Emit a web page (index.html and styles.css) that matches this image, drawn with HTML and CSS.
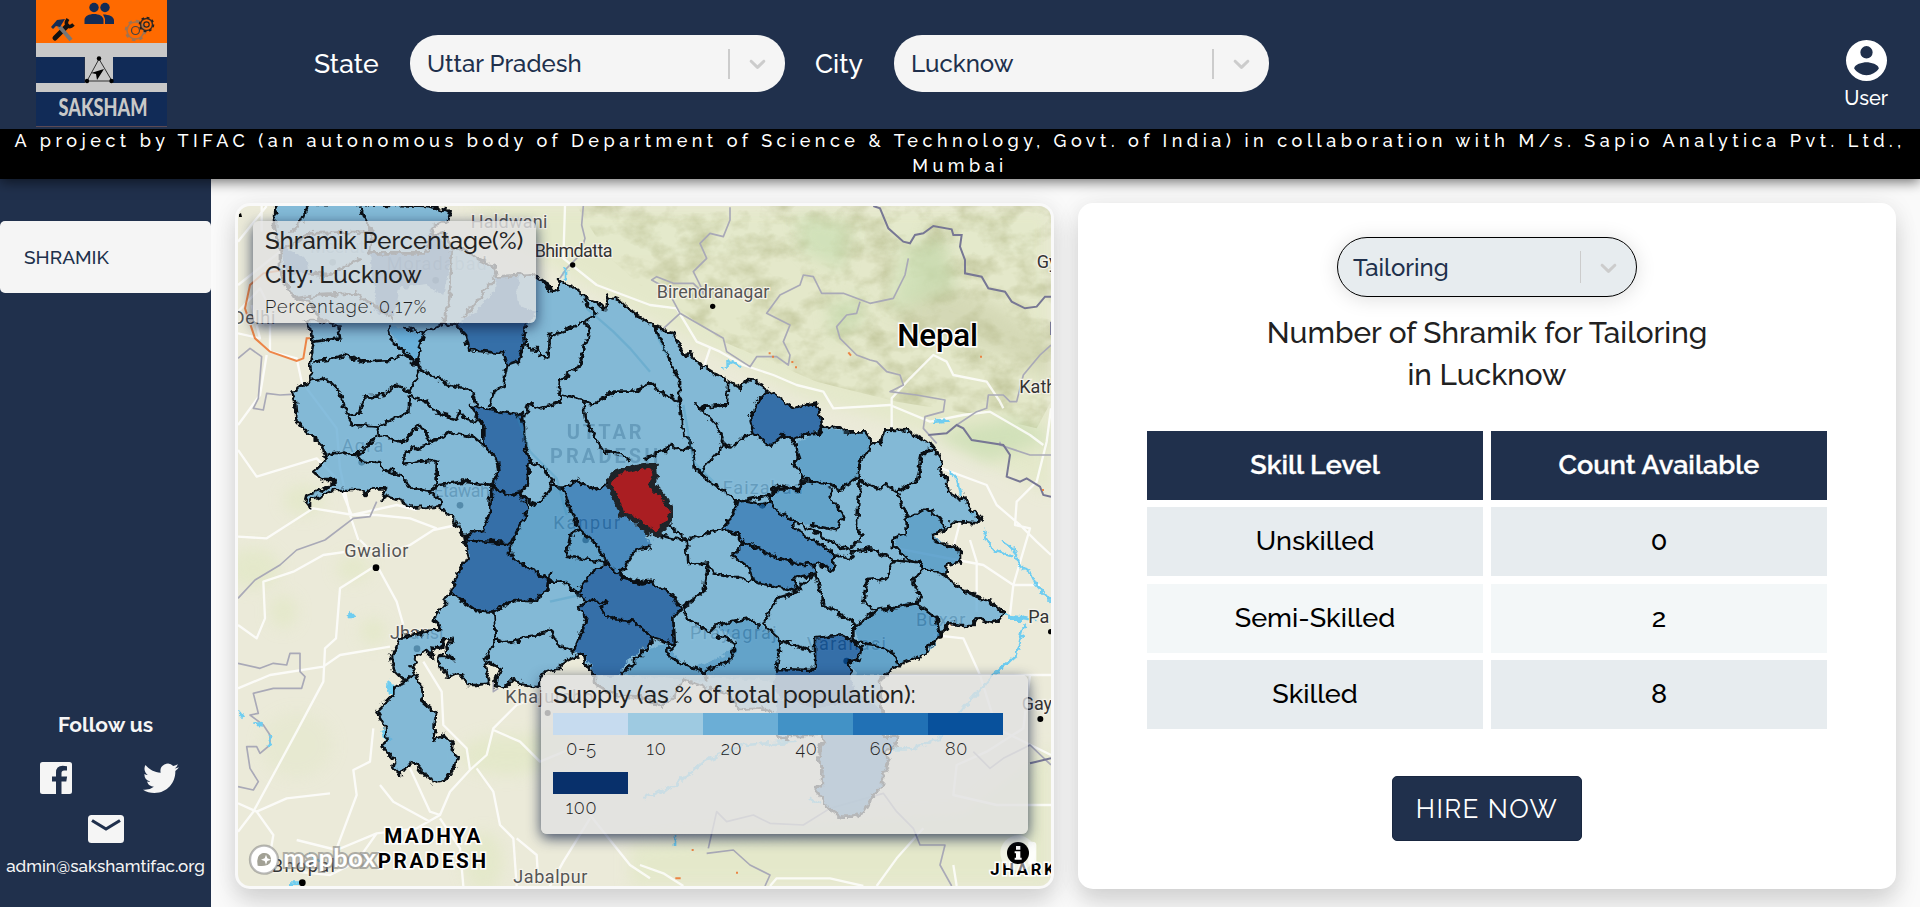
FILE: index.html
```html
<!DOCTYPE html>
<html lang="en">
<head>
<meta charset="utf-8">
<title>Saksham</title>
<link rel="stylesheet" href="styles.css">
</head>
<body>
<header class="top">
  <div class="bar">
    <svg class="logo" viewBox="0 0 131 127">
      <path fill="#ff6a00" d="M0 0h131v44H0z"/><path fill="#c8c8c8" d="M0 43h131v14H0zM49 56h28v28H49zM0 83h131v9H0z"/>
      <path fill="#112b57" d="M0 57h48v26H0zM77 57h54v26H77zM0 92h131v34H0z"/><path fill="#5b4a55" d="M0 126h131v1H0z"/>
      <g fill="#142c55"><circle cx="58" cy="7.500" r="4.700"/><circle cx="69" cy="7.500" r="4.700"/><path d="M48.500 24v-4c0-8 19-8 19 0v4zM69 24v-5q-1-3-2-4.500c6 0 11 2 11 6v3.500z"/></g>
      <path d="M19 38L31 26" stroke="#111" stroke-width="5" stroke-linecap="round"/><path d="M32 19q-3 4-.5 6.500t6-1" stroke="#111" stroke-width="3.500" fill="none"/>
      <path d="M23 26l12 14" stroke="#777" stroke-width="4"/><path d="M15 27l6-7 8-1-5 8-4-1-3 3z" fill="#142c55"/>
      <g fill="none"><circle cx="99.500" cy="30.500" r="8.500" stroke="#a87248" stroke-width="1.600"/><circle cx="99.500" cy="30.500" r="9.800" stroke="#98745a" stroke-width="2" stroke-dasharray="3.600 4.100"/><circle cx="99.500" cy="30.500" r="4" stroke="#444" stroke-width="1.200"/>
      <circle cx="110.500" cy="24.500" r="6" stroke="#3a2a20" stroke-width="1.500"/><circle cx="110.500" cy="24.500" r="7" stroke="#222" stroke-width="1.600" stroke-dasharray="2.700 2.800"/><circle cx="110.500" cy="24.500" r="2.700" stroke="#222" stroke-width="1.200"/></g>
      <path d="M63 59L51 81H76Z" fill="none" stroke="#333"/><circle cx="63" cy="58.500" r="2.200"/><circle cx="51" cy="81" r="2.200"/><circle cx="75.500" cy="81" r="2.200"/><path d="M68 69l-13 4 5 1 1 6z"/>
      <text x="67" y="116" class="logo-text" textLength="89" lengthAdjust="spacingAndGlyphs">SAKSHAM</text>
    </svg>
    <div class="filters">
      <label class="flabel state">State</label>
      <div class="select"><span>Uttar Pradesh</span><i></i><svg viewBox="0 0 20 20"><path d="M4.516 7.548c.436-.446 1.043-.481 1.576 0L10 11.295l3.908-3.747c.533-.481 1.141-.446 1.574 0 .436.445.408 1.197 0 1.615l-4.695 4.502c-.217.223-.502.335-.787.335s-.57-.112-.789-.335L4.516 9.163c-.408-.418-.436-1.170 0-1.615z"/></svg></div>
      <label class="flabel city">City</label>
      <div class="select"><span>Lucknow</span><i></i><svg viewBox="0 0 20 20"><path d="M4.516 7.548c.436-.446 1.043-.481 1.576 0L10 11.295l3.908-3.747c.533-.481 1.141-.446 1.574 0 .436.445.408 1.197 0 1.615l-4.695 4.502c-.217.223-.502.335-.787.335s-.57-.112-.789-.335L4.516 9.163c-.408-.418-.436-1.170 0-1.615z"/></svg></div>
    </div>
    <div class="user"><svg viewBox="0 0 496 496"><path fill="#fff" fill-rule="evenodd" d="M248 0a248 248 0 1 0 0 496a248 248 0 1 0 0-496zM248 74a74 74 0 1 1 0 149a74 74 0 1 1 0-149zM248 426c-62 0-117-32-149-80c1-49 99-76 149-76s148 27 149 76c-32 48-87 80-149 80z"/></svg><span>User</span></div>
  </div>
  <div class="banner">A project by TIFAC (an autonomous body of Department of Science &amp; Technology, Govt. of India) in collaboration with M/s. Sapio Analytica Pvt. Ltd., Mumbai</div>
</header>
<div class="body">
  <aside class="side">
    <a class="nav">SHRAMIK</a>
    <div class="follow">
      <b>Follow us</b>
      <div class="social">
        <svg class="fb" viewBox="0 0 32 32"><path fill="#f5f5f5" d="M2.500 0h27Q32 0 32 2.500v27Q32 32 29.500 32H21.500V19.600h4.800l.8-5H21.500V11q0-2.600 2.600-2.600H27V4.200q-2-.4-4.300-.4Q16 3.800 16 10.600v4H12v5h4V32H2.500Q0 32 0 29.500v-27Q0 0 2.500 0z"/></svg>
        <svg class="tw" viewBox="0 0 24 19.500"><path fill="#f5f5f5" d="M23.954 2.569a10 10 0 0 1-2.825.775 4.958 4.958 0 0 0 2.163-2.723c-.951.555-2.005.959-3.127 1.184a4.920 4.920 0 0 0-8.384 4.482C7.691 6.094 4.066 4.130 1.640 1.161a4.822 4.822 0 0 0-.666 2.475c0 1.710.87 3.213 2.188 4.096a4.904 4.904 0 0 1-2.228-.616v.061a4.923 4.923 0 0 0 3.946 4.827 4.996 4.996 0 0 1-2.212.085 4.937 4.937 0 0 0 4.604 3.417A9.868 9.868 0 0 1 0 17.540a13.995 13.995 0 0 0 7.557 2.209c9.054 0 13.999-7.496 13.999-13.986 0-.209 0-.420-.015-.630a9.936 9.936 0 0 0 2.413-2.564z"/></svg>
      </div>
      <svg class="mail" viewBox="0 0 36 28"><rect width="36" height="28" rx="3.500" fill="#f5f5f5"/><path d="M4 5.500L18 14L32 5.500" fill="none" stroke="#20304c" stroke-width="3.200"/></svg>
      <span class="email">admin@sakshamtifac.org</span>
    </div>
  </aside>
  <main>
    <section class="map">
      <svg class="canvas" viewBox="24 33 2439 2040">
        <defs>
          <filter id="jag" x="-2%" y="-2%" width="104%" height="104%" color-interpolation-filters="sRGB"><feTurbulence type="fractalNoise" baseFrequency=".05" numOctaves="3" seed="4"/><feDisplacementMap in="SourceGraphic" scale="24" xChannelSelector="R" yChannelSelector="G"/></filter>
          <filter id="hills" x="0" y="0" width="100%" height="100%" color-interpolation-filters="sRGB"><feTurbulence type="fractalNoise" baseFrequency=".011 .016" numOctaves="4" seed="9"/><feColorMatrix values="0 0 0 0 .62  0 0 0 0 .64  0 0 0 0 .42  2.2 0 0 0 -.9" result="n"/><feComposite in="n" in2="SourceAlpha" operator="in"/></filter>
          <filter id="soft"><feGaussianBlur stdDeviation="22"/></filter>
          <path id="up" d="M136 20L590 33 662 48 655 75 610 95 605 125 640 110 668 165 700 160 740 190 795 215 800 245 860 240 910 238 945 262 965 290 985 285 990 258 1030 275 1070 310 1100 320 1125 345 1130 305 1165 315 1200 345 1235 370 1275 398 1330 412 1360 480 1380 472 1405 505 1495 560 1530 578 1548 555 1578 557 1615 585 1690 637 1760 622 1777 695 1827 697 1850 712 1905 712 1930 745 1952 745 1963 703 2030 706 2100 745 2115 765 2135 800 2125 830 2150 850 2155 890 2190 910 2205 905 2220 940 2240 955 2258 975 2245 985 2165 980 2150 1005 2112 1020 2115 1038 2145 1048 2190 1065 2190 1100 2150 1110 2145 1140 2180 1170 2195 1185 2280 1220 2320 1250 2315 1270 2290 1285 2240 1270 2230 1290 2190 1290 2160 1285 2130 1320 2095 1355 2090 1375 2005 1410 1965 1440 1950 1455 1955 1555 1960 1625 2000 1625 2000 1650 1965 1675 1978 1710 1960 1735 1955 1775 1930 1800 1900 1850 1870 1865 1835 1865 1800 1845 1770 1805 1750 1780 1775 1775 1778 1715 1765 1695 1770 1645 1788 1645 1775 1620 1675 1620 1675 1635 1645 1630 1640 1620 1630 1555 1590 1540 1530 1545 1500 1500 1435 1480 1360 1455 1330 1505 1300 1535 1230 1505 1150 1500 1095 1465 1095 1445 1065 1405 1060 1375 1015 1395 980 1425 935 1435 925 1475 870 1465 850 1453 825 1478 795 1470 800 1445 815 1420 775 1400 765 1410 775 1465 740 1470 715 1470 695 1435 680 1435 650 1450 645 1425 625 1410 635 1380 672 1395 645 1370 665 1335 640 1330 640 1360 605 1355 610 1385 580 1370 555 1385 560 1405 545 1415 555 1435 578 1490 578 1520 618 1555 610 1635 645 1620 668 1645 665 1670 680 1685 675 1715 650 1750 625 1765 590 1747 560 1710 540 1703 510 1740 488 1720 495 1700 458 1655 470 1635 465 1595 440 1550 490 1500 490 1473 525 1460 490 1425 480 1385 500 1355 515 1325 630 1305 625 1285 610 1270 660 1200 685 1130 715 1085 705 1050 700 1025 680 990 670 965 625 935 560 940 520 920 475 905 455 915 465 880 430 880 405 900 385 885 310 885 240 915 240 940 225 920 230 900 290 880 320 855 280 855 250 830 290 795 275 750 225 705 200 680 195 620 185 590 245 555 240 505 250 450 240 400 225 375 270 375 240 320 195 310 165 265 150 230 150 170 135 100Z"/>
        </defs>
        <rect x="24" y="33" width="2439" height="2040" fill="#ebead9"/>
        <g filter="url(#soft)" fill="#e2e8c6" opacity=".75">
          <path d="M720 33H2463V900L2100 720 1700 600 1350 420 1100 290 850 150z"/><ellipse cx="70" cy="1120" rx="80" ry="60"/><ellipse cx="160" cy="1250" rx="40" ry="50"/><ellipse cx="220" cy="915" rx="60" ry="45"/><ellipse cx="370" cy="1120" rx="50" ry="40"/><ellipse cx="430" cy="1310" rx="40" ry="40"/><ellipse cx="830" cy="1680" rx="140" ry="60"/><ellipse cx="960" cy="1640" rx="70" ry="40"/><path d="M1200 1950L1800 1880 2200 1860 2463 1650V2073H1200z"/><ellipse cx="760" cy="2000" rx="60" ry="90"/><ellipse cx="200" cy="1650" rx="110" ry="100" opacity=".5"/>
        </g>
        <path filter="url(#hills)" opacity=".45" fill="#000" d="M1040 33H2463V620L2420 700 2250 660 2000 620 1760 560 1620 500 1480 440 1330 330 1230 270 1140 190z"/>
        <path filter="url(#soft)" fill="#b9bd92" opacity=".35" d="M2090 90L2150 100 2130 260 2300 330 2400 400 2463 420V560L2300 470 2100 420 1990 380 2080 260z"/>
        <g filter="url(#soft)" fill="#c5dcae" opacity=".6"><path d="M1700 60l160 30-20 140-120-60zM2020 160l120-30 40 150-200 70zM2110 720l240-50 120 60-200 70z"/><path d="M1790 330l100-30 10 80-90 50z"/></g>
        <g fill="none" stroke="#fff" stroke-width="7" opacity=".8" stroke-linejoin="round">
          <path d="M24 140L110 33M95 33V110M24 270L150 170M24 350L90 280 120 340M24 415L90 430 65 330M120 350V470L200 490 215 560 320 700 330 820 360 960 385 1035M24 690L90 600 110 480M24 765L80 845 260 790 320 850 365 960M24 1025L110 1030 250 940 370 960 440 960 540 970 620 1000M365 960L500 930 560 945M390 1035L440 1085 540 1050 610 1005 680 990M440 1110L330 1180 318 1330 285 1360 280 1460 200 1610 70 1850 24 1910M440 1110L500 1220 520 1290M24 1480L120 1440 280 1415 330 1380 480 1355M24 1290L80 1330 105 1270 100 1160 190 1130 280 1080 420 1060M580 1400L635 1490 640 1590 710 1660 720 1725 660 1790 630 1860 560 1900 440 1915 380 2000 300 2040 200 2030M720 1725L770 1680 790 1600 860 1530 940 1500M740 1720L790 1790 810 1890 850 1930 860 2073M790 1605L870 1640 930 1700 1050 1650M540 1720L600 1850 630 1860M430 1600L420 1700 370 1725 380 1800 320 1960M450 1770L490 1820 600 1880M24 1825L80 1850 130 1920 120 1980M80 1850L170 1810 300 1795M200 1935L320 1965 440 1915M630 1870L690 1960 700 2073M860 1930L920 1980 925 2060M1080 1870L1000 2000 960 2073M1080 1860L1200 2010 1260 2050"/>
          <path d="M1005 33L1000 190 1100 270 1260 330 1340 340 1400 440 1470 470 1540 510 1630 540 1700 570 1780 590 1810 640 1980 630 2100 680 2200 660 2280 650 2400 720 2440 750M1985 700V610L2040 550 2110 480 2150 500 2170 540 2270 560 2310 620 2320 640M2463 640L2450 740 2420 860 2360 920 2355 990 2400 1000 2350 1170 2430 1170M2000 1060L2260 1110 2350 1170 2340 1260M2135 820L2270 870 2300 930 2370 990 2420 1040 2463 1080M2110 1320L2200 1330 2250 1440 2300 1600 2463 1680M1960 1440H2463M2400 1440L2380 1600 2270 1670 2180 1710 2170 1800 2300 1830 2463 1830M1230 2010L1300 2035 1360 2073M1620 2073L1640 2050 1800 2050 1900 2073M1940 2073L2000 1990 2080 1900M2170 2010L2180 2073M2220 1035L2240 1100 2240 1250M2190 980L2170 1060M1440 460L1420 520"/>
        </g>
        <g fill="none" stroke="#a9a9b7" stroke-width="5" stroke-linejoin="round">
          <path d="M24 490L60 460 95 485 85 610 70 640 100 645 110 595 150 600 185 598M24 1210L75 1155 150 1110 200 1065 285 1035M285 1035L370 970 420 965 440 920M24 1405L90 1420 130 1405 170 1410 180 1375 210 1375 210 1430 225 1445 215 1480 130 1480 70 1495 85 1555 60 1560 100 1590 120 1620 120 1650 90 1675 80 1655 50 1655 60 1720 85 1760 70 1785 24 1775M790 1460V1490L805 1480M1500 37L1500 75 1480 125 1440 115 1410 145 1430 190 1390 230 1425 300M1425 300L1390 265 1330 265 1280 245 1265 255 1310 280 1350 355 1290 410M1350 355L1480 430 1490 470 1560 515 1580 485 1640 485 1675 510 1680 480 1660 440 1680 390 1610 355 1650 300 1710 270 1720 240 1750 245 1775 295 1840 295 1920 325 1990 310 2025 240 2035 190M1890 320L1880 355 1850 360 1820 395 1830 430 1880 480 1920 495 1940 500 1970 530 2010 540 2020 570 1980 590 2060 600 2145 615 2140 650 2085 665 2080 700 2120 745M2180 690L2240 650 2270 640 2275 600 2320 600 2340 620 2360 620 2380 540 2430 480 2463 450M2310 740L2310 750 2400 780 2463 780"/>
          <path d="M1060 33L1055 90 1065 130 1050 180 1010 220 990 250M1435 1960L1460 1850 1490 1880 1570 1860 1620 1885 1720 1890 1800 1840 1960 1795 2000 1850 2050 1900 2070 1950 2145 1950 2130 2010 2165 2073M1430 1975L1510 1965 1560 2010 1620 2040 1605 2073M2230 1670L2280 1720 2320 1690 2400 1650 2463 1710" />
        </g>
        <path fill="none" stroke="#777794" stroke-width="6" d="M1930 33L1950 40 1975 100 2020 140 2040 145 2055 120 2080 115 2110 93 2165 103 2170 120 2195 120 2190 155 2205 195 2205 235 2255 245 2275 280 2325 290 2345 320 2385 340 2420 335 2445 305H2463M2095 720L2150 715 2180 690 2200 700 2225 735 2320 750 2340 780 2330 845 2370 860 2390 850 2430 875 2440 900 2463 905M2400 1705L2463 1690M2463 380V420"/>
        <g fill="none" stroke="#6fcdf0" stroke-width="8" filter="url(#jag)"><path d="M1005 220L1005 255M2155 830L2180 850 2195 900M2220 940L2230 970M2260 1005L2275 1040 2300 1070 2350 1085M2310 1035L2350 1060 2370 1110 2400 1130 2420 1170 2463 1220M2320 1260L2420 1275M2385 1285L2360 1380 2280 1450 2200 1540 2130 1630 2050 1660 1980 1660M1240 1810L1340 1770 1420 1700 1540 1650 1700 1640M1480 520L1500 500 1540 515M2115 680L2160 676M120 1620V1650M70 1585L95 1588M24 1545L45 1570M1335 1920V1950M180 2063H210M240 1975L270 2000M1740 1810L1770 1830"/><path stroke-width="16" d="M355 1255L370 1270M475 1460L490 1500M455 1600L475 1640M2340 1270h40"/></g>
        <path fill="none" stroke="#ec7a36" stroke-width="6" opacity=".9" d="M240 430L230 430 220 490 200 498 120 470 75 430 45 340 60 270 100 235 160 225M1616 475h6M1626 485h6M1684 501h6M1695 517h6M1855 472L1863 482M2250 485h6M2436 885h6M1385 1965h6M1518 2033h6M1336 2050h16"/>
        <g class="cities">
          <text x="8" y="388" textLength="128">Delhi</text><text x="722" y="100" textLength="230">Haldwani</text><text x="914" y="185" textLength="234" class="ink">Bhimdatta</text><text x="1280" y="309" textLength="338">Birendranagar</text><text x="2420" y="218" class="ink">Gy</text><text x="2368" y="594" class="ink">Kath</text>
          <text x="343" y="1087" textLength="192">Gwalior</text><text x="480" y="1333" textLength="160">Jhansi</text><text x="826" y="1525" textLength="264">Khajuraho</text><text x="850" y="2065" textLength="222">Jabalpur</text><text x="2395" y="1283" class="ink">Pa</text><text x="2375" y="1546" class="ink">Gay</text><text x="125" y="2031" textLength="190" class="ink">Bhopal</text>
          <text x="335" y="770" textLength="125">Agra</text><text x="610" y="907" textLength="170">Etawah</text><text x="970" y="1003" textLength="200">Kanpur</text><text x="1478" y="898" textLength="240">Faizabad</text><text x="1380" y="1333" textLength="260">Prayagraj</text><text x="1730" y="1366" textLength="238">Varanasi</text><text x="2058" y="1293" textLength="148">Buxar</text><text x="240" y="173" textLength="165">Meerut</text><text x="470" y="226" textLength="300">Moradabad</text>
        </g>
        <g fill="#000"><circle cx="1028" cy="210" r="8"/><circle cx="1448" cy="334" r="8"/><circle cx="438" cy="1118" r="10"/><circle cx="953" cy="1554" r="9"/><circle cx="217" cy="2063" r="10"/><circle cx="2462" cy="1310" r="8"/><circle cx="2431" cy="1572" r="9"/><circle cx="2130" cy="1322" r="9"/><circle cx="395" cy="802" r="10"/><circle cx="690" cy="931" r="10"/><circle cx="1067" cy="1035" r="10"/><circle cx="1597" cy="931" r="10"/><circle cx="1511" cy="1366" r="10"/><circle cx="1850" cy="1398" r="10"/><circle cx="561" cy="1361" r="10"/><circle cx="308" cy="202" r="10"/><circle cx="617" cy="256" r="10"/><path d="M27 66v-8l6-4 3 12z"/></g>
        <g class="states"><text x="1010" y="732" textLength="225">UTTAR</text><text x="960" y="804" textLength="325">PRADESH</text></g>
        <g opacity=".8" filter="url(#jag)">
          <use href="#up" fill="#6aaed6"/>
          <g fill="#08519c">
            <path d="M680 390L740 345 790 290 800 245 870 245 860 300 865 330 920 355 895 385 880 400 885 440 865 500 830 512 820 475 770 470 715 465 705 420z"/>
            <path d="M720 630L860 660 875 648 885 700 885 760 900 800 890 870 870 895 895 940 880 970 845 1045 840 1080 905 1125 960 1155 955 1180 930 1195 920 1220 850 1215 790 1250 735 1245 700 1220 665 1200 685 1130 720 1080 705 1045 700 1025 760 1005 780 950 785 875 805 830 800 790 760 750 760 690z"/>
            <path d="M1040 1195L1085 1130 1135 1110 1175 1145 1230 1165 1265 1160 1325 1200 1355 1240 1330 1270 1335 1350 1270 1330 1230 1370 1180 1410 1175 1440 1095 1445 1065 1380 1030 1370 1060 1300 1070 1265 1045 1245 1070 1215z"/>
            <path d="M1615 585L1690 637 1760 622 1777 695 1770 715 1720 720 1690 735 1660 720 1620 755 1570 710 1560 670 1590 610z"/>
            <path d="M1760 1330L1840 1320 1895 1360 1885 1395 1855 1400 1865 1440 1880 1500 1840 1535 1750 1540 1650 1510 1625 1440 1640 1422 1760 1428 1755 1380z"/>
            <path d="M150 150L230 190 235 235 170 235zM420 175H590L600 100 665 170 640 300 590 270 510 280 490 370 440 350z"/>
          </g>
          <g fill="#2171b5">
            <path d="M1000 880L1040 855 1095 885 1140 860 1180 960 1250 1010 1265 1055 1230 1060 1215 1065 1170 1140 1135 1105 1095 1045 1050 1005 1020 940z"/>
            <path d="M1520 915L1600 930 1620 920 1640 950 1690 975 1690 1000 1790 1060 1810 1080 1810 1130 1760 1105 1755 1135 1690 1150 1705 1190 1570 1160 1560 1120 1505 1080 1540 1050 1530 1020 1470 1005 1510 960z"/>
            <path d="M1640 1510L1750 1540 1840 1535 1880 1500 1950 1540 1955 1555 1960 1625 2000 1625 2000 1650 1965 1675 1978 1710 1960 1735 1955 1775 1930 1800 1900 1850 1870 1865 1835 1865 1800 1845 1770 1805 1750 1780 1775 1775 1778 1715 1765 1695 1770 1645 1788 1645 1775 1620 1675 1620 1645 1620z"/>
          </g>
          <g fill="#4292c6">
            <path d="M895 940L970 875 1000 880 1020 940 1050 1005 1095 1045 1135 1105 1085 1130 1040 1195 1000 1160 960 1155 905 1125 840 1080 845 1045 880 970zM1700 745L1777 700 1850 712 1905 712 1930 745 1890 800 1885 845 1830 885 1790 870 1720 855 1700 800zM1625 880L1700 880 1730 855 1800 870 1810 920 1840 960 1820 1005 1740 990 1680 970 1620 930zM2030 970L2090 940 2120 965 2150 1005 2115 1020 2145 1048 2190 1065 2190 1100 2150 1110 2145 1140 2080 1120 2030 1090 1990 1030 2030 1015zM1870 1300L1940 1245 2040 1220 2120 1270 2130 1320 2090 1375 2005 1410 1965 1440 1880 1440 1860 1400 1895 1380 1895 1350zM1460 1290L1560 1270 1600 1300 1650 1340 1640 1430 1630 1460 1420 1440 1400 1420 1520 1360 1520 1340zM1175 1440L1210 1400 1240 1370 1310 1340 1350 1400 1430 1430 1430 1460z"/>
          </g>
          <path fill="#4ba3dc" d="M475 390L520 400 580 420 560 505 510 450z"/>
        </g>
        <g class="edges" filter="url(#jag)">
            <use href="#up"/>
            <path d="M235 33L215 80 180 115M390 33L405 75 425 110 420 175 590 175 605 110M150 170L240 115 420 110M235 235L300 240 390 190M195 310L270 300 380 295 490 370M665 170L660 300 640 380M795 250L700 370M270 375L325 390 330 430 250 440M475 390L480 430 565 510M580 415L640 385 680 390M560 505L580 415 520 395M250 500L290 495 340 480 400 500 480 495 520 480 565 510M565 510L570 525 540 590 500 570 460 600 405 605 390 655 350 660 330 590 290 550 245 555M565 520L660 570 730 590 740 630M540 600L535 650 445 695 370 690 350 660M545 605L590 620 620 655 680 670 690 650 710 675 760 680M445 695L450 725 510 740 530 735 545 710 570 690 600 740M600 745L560 760 525 770 520 810 600 795 620 800 620 870M600 740L640 730 650 710 730 725 770 760M290 780L340 770 385 780 440 720M385 780L400 800 450 805 460 830 510 840 545 880 600 890 630 870 700 860 785 870M600 890L635 920 625 935M465 825h30M350 775h40"/>
            <path d="M680 390L705 420 715 465 770 470 820 475 830 512 820 575 790 590 780 635M830 512L865 500 885 440 880 400 895 385M885 450L915 470 925 455 930 480 955 490 960 420 1000 410 1060 380 1095 360 1060 310M1060 380L1080 400 1060 470 1050 510 990 555 985 600 1060 615 1090 630 1150 590 1210 590 1260 565 1290 590 1340 615 1355 640M885 670L895 625 930 640 985 620 990 600M1060 620L1065 670 1090 720 1120 770 1170 775 1200 800M1275 398L1315 485 1350 560 1350 630 1360 720 1385 745 1395 820 1440 860 1520 915M1495 560L1490 630 1410 640 1400 625 1420 650 1460 690 1480 730 1470 765 1440 800 1410 835M1480 745L1505 760 1540 725 1570 715M1385 750L1360 770 1320 750 1300 770 1240 790M1615 585L1590 610 1560 670 1570 710 1620 755 1660 720 1690 735 1720 720 1770 715 1777 695M1690 735L1710 790 1690 800 1720 850 1700 885 1650 870 1620 900 1520 920"/>
            <path d="M720 630L860 660 875 648 885 700 885 760 900 800 890 870 870 895 840 900 785 875 805 830 800 790 760 750 760 690zM785 875L780 950 760 1005 700 1025M870 895L895 940M900 800L940 815 970 870 920 930 895 920 870 895M970 870L1000 880 1040 855 1095 885 1140 860M895 940L880 970 845 1045 700 1035M1000 880L1020 940 1050 1005 1095 1045 1135 1105M840 1050L840 1080 905 1125 960 1155M1010 1085L1020 1020 1050 1005M1010 1085L1085 1095 1135 1105 1085 1130 1040 1195M665 1200L700 1220 735 1245 790 1250 850 1215 920 1220 930 1195 955 1180 960 1130M960 1160L1000 1160 1040 1195 1070 1215 1045 1245 1070 1265 1060 1300 1030 1370 1005 1360M790 1250L795 1330 830 1345 890 1325 930 1320 960 1305 980 1340 1005 1360M795 1330L765 1400M1070 1215L1130 1225 1110 1240 1140 1270 1210 1280 1270 1330 1335 1350 1330 1270 1355 1240 1325 1200 1265 1160 1230 1165 1175 1145 1135 1110M555 1435L525 1460"/>
            <path d="M1250 1010L1330 1030 1370 1035 1375 1110 1435 1105 1450 1135 1570 1160M1320 990L1370 1035 1470 1005M1435 1105L1420 1190 1360 1235M1265 1055L1230 1060 1215 1065 1170 1140 1240 1160M1370 1270L1440 1310 1460 1290 1560 1270 1590 1300M1360 1240L1370 1270M1460 1320L1520 1345 1500 1395 1420 1430 1320 1390 1310 1370 1340 1340M1705 1190L1640 1210 1600 1290 1650 1335 1750 1370M1705 1180L1750 1140M1750 1110L1780 1230 1870 1280 1870 1340M1690 975L1690 1000 1790 1060 1810 1080 1810 1130 1760 1105M1870 1070L1860 1090 1810 1080M1870 1070L1920 1060 1990 1095 1970 1150 1910 1155 1900 1220 1940 1250M1990 1095L2070 1105 2080 1120 2050 1160 2070 1200 2060 1225 1940 1245M2080 1120L2145 1140M2060 1225L2120 1270 2130 1320M1870 1300L1940 1245M1870 1340L1940 1350 1990 1375 2005 1410M1650 1340L1640 1430M1755 1330L1840 1320 1895 1360 1885 1395 1855 1400 1865 1440M1755 1330L1755 1425 1640 1422M1420 1430L1430 1460M1175 1440L1210 1400 1240 1370 1270 1330"/>
            <path d="M1470 1005L1510 960 1520 915 1600 930 1620 920 1640 950 1690 975 1760 1015 1850 1065 1870 1070M1505 1080L1540 1050 1530 1020 1470 1005M1530 1035L1620 1080 1720 1110 1760 1105M1505 1080L1560 1120 1570 1160 1705 1190 1690 1150 1755 1135M1625 930L1625 880 1700 880 1730 855 1800 870 1830 885 1885 845M1740 990L1820 1005 1840 960 1810 920 1800 880M1885 850L1890 800 1930 745M1700 745L1700 800M1890 850L1880 1000 1900 1020 1860 1060M1890 855L1940 880 1970 870 2000 890 2030 970 2030 1015 1990 1030 1985 1060M2000 890L2060 860 2080 770 2115 765M2030 970L2090 940 2120 965 2150 1005M1985 1040L2030 1090 2080 1110"/>
        </g>
        <path filter="url(#jag)" fill="#aa1e22" stroke="#1e2429" stroke-width="17" stroke-linejoin="round" d="M1133 858L1161 830 1241 812 1271 810 1276 845 1266 870 1300 905 1325 945 1318 980 1278 1022 1240 996 1210 968 1176 960 1161 915z"/>
        <path fill="none" stroke="#3190bd" stroke-width="7" opacity=".25" d="M1070 340L1150 410 1200 460 1260 530M1280 420L1310 480M1360 630L1390 800 1450 860M860 660L900 770 980 850 1010 960M960 1220L1050 1200"/>
        <g class="places"><text x="2002" y="453" textLength="242" class="nepal">Nepal</text><text x="463" y="1945" textLength="288">MADHYA</text><text x="443" y="2019" textLength="325">PRADESH</text><text x="2281" y="2040" class="jh">JHARK</text></g>
        <circle cx="102" cy="1994" r="42" fill="#fff" stroke="#777" stroke-opacity=".5" stroke-width="7"/><path d="M83 2012Q77 1982 96 1975C118 1968 130 1992 119 2005Q109 2016 83 2012z" fill="#a2a195"/><path d="M108 1979l4 11 11 4-11 4-4 11-4-11-11-4 11-4z" fill="#fff"/>
        <text x="160" y="2016" class="mb" textLength="278">mapbox</text>
        <path d="M2395 1940h12q12 0 12 10v50q0 8-12 8h-12z" fill="#fff" opacity=".85"/><circle cx="2364" cy="1974" r="53" fill="#fff" opacity=".5"/><circle cx="2364" cy="1974" r="33"/><path d="M2358 1953h13v11h-13zM2354 1969h17v19h4v6h-21v-6h4v-13h-4z" fill="#fff"/>
      </svg>
      <div class="tip"><h4>Shramik Percentage(%)</h4><h4>City: Lucknow</h4><p>Percentage: 0.17%</p></div>
      <div class="legend"><h4>Supply (as % of total population):</h4>
        <div class="scale"><span class="s1">0-5</span><span class="s2">10</span><span class="s3">20</span><span class="s4">40</span><span class="s5">60</span><span class="s6">80</span><span class="s7">100</span></div>
      </div>
    </section>
    <section class="panel">
      <div class="select trade"><span>Tailoring</span><i></i><svg viewBox="0 0 20 20"><path d="M4.516 7.548c.436-.446 1.043-.481 1.576 0L10 11.295l3.908-3.747c.533-.481 1.141-.446 1.574 0 .436.445.408 1.197 0 1.615l-4.695 4.502c-.217.223-.502.335-.787.335s-.57-.112-.789-.335L4.516 9.163c-.408-.418-.436-1.170 0-1.615z"/></svg></div>
      <h2>Number of Shramik for Tailoring<br>in Lucknow</h2>
      <div class="table">
        <div class="th">Skill Level</div><div class="th">Count Available</div>
        <div>Unskilled</div><div>0</div>
        <div class="alt">Semi-Skilled</div><div class="alt">2</div>
        <div>Skilled</div><div>8</div>
      </div>
      <button>HIRE NOW</button>
    </section>
  </main>
</div>
</body>
</html>
```
FILE: styles.css
```css
* { box-sizing: border-box; }
body { margin: 0; height: 907px; overflow: hidden; font-family: Raleway, Lato, "Open Sans", sans-serif; font-weight: 500; background: #fafafa; display: flex; flex-direction: column; }
h2, h4, p { margin: 0; font-weight: 500; }
.top { position: relative; z-index: 3; box-shadow: 0 3px 12px rgba(0,0,0,.55); }
.bar { height: 129px; background: #20304c; display: flex; align-items: flex-start; padding-left: 36px; }
.logo { width: 131px; height: 127px; display: block; flex: none; }
.logo-text { font: 900 24px Lato, sans-serif; fill: #c8c8c8; text-anchor: middle; }
.filters { display: flex; align-items: center; height: 57px; margin: 35px 0 0 147px; }
.flabel { color: #fff; font-size: 26.500px; white-space: nowrap; }
.state { width: 96px; }
.city { width: 79px; margin-left: 30px; }
.select { width: 375px; height: 57px; border-radius: 28px; background: #f5f5f5; color: #20304c; display: flex; align-items: center; padding: 0 14px 0 17px; font-size: 24px; font-weight: 500; white-space: nowrap; }
.select span { flex: 1; }
.select i { width: 2px; height: 30px; background: #ccc; margin-right: 14px; }
.select svg { width: 27px; height: 27px; fill: #ccc; }
.user { margin: 40px 32px 0 auto; display: flex; flex-direction: column; align-items: center; color: #fff; font-size: 20px; line-height: 24px; }
.user svg { width: 41px; height: 41px; margin-bottom: 5px; }
.banner { height: 50px; background: #000; color: #fff; font-size: 18px; line-height: 24.500px; letter-spacing: 4.500px; text-align: center; padding: 0 10px; }
.body { flex: 1; display: flex; min-height: 0; }
.side { width: 211px; flex: none; background: #20304c; display: flex; flex-direction: column; padding-top: 42px; }
.nav { height: 72px; border-radius: 5px; background: #f5f5f5; color: #20304c; padding-left: 24px; line-height: 73px; font-size: 19px; }
.follow { margin-top: auto; height: 195px; display: flex; flex-direction: column; align-items: center; color: #f5f5f5; }
.follow b { font-size: 21px; line-height: 26px; }
.social { display: flex; justify-content: space-between; width: 139px; margin: 24px 0 21px 8px; height: 32px; align-items: center; }
.fb { width: 32px; height: 32px; }
.tw { width: 36px; height: 30px; }
.mail { width: 36px; height: 28px; margin-bottom: 12px; }
.email { font-size: 17px; line-height: 22px; }
main { flex: 1; display: flex; gap: 24px; padding: 24px 24px 18px 24px; }
.map, .panel { height: 686px; border-radius: 15px; box-shadow: 0 14px 24px rgba(0,0,0,.14), 0 0 26px rgba(0,0,0,.06); }
.map { width: 819px; flex: none; padding: 3px; background: #f9f9f9; position: relative; }
.canvas { width: 813px; height: 680px; display: block; border-radius: 12px; }
.edges { fill: none; stroke: #0a0f14; stroke-width: 8; stroke-linejoin: round; }
.cities { font: 54px Roboto, sans-serif; fill: #555; stroke: #f4f2e8; stroke-width: 7; paint-order: stroke; }
.ink { fill: #333; }
.states { font: bold 60px Roboto, sans-serif; fill: #333; opacity: .8; }
.places { font: bold 62px Roboto, sans-serif; fill: #000; stroke: #fff; stroke-width: 9; paint-order: stroke; }
.nepal { font-size: 94px; font-weight: 500; }
.jh { font-size: 50px; letter-spacing: 8px; }
.mb { font: bold 76px Lato, sans-serif; fill: #fff; stroke: #777; stroke-opacity: .55; stroke-width: 12; paint-order: stroke; }
.tip, .legend { position: absolute; border-radius: 6px; background: rgba(225,225,225,.8); color: #222; box-shadow: 0 4px 14px rgba(19,34,70,.8); white-space: nowrap; }
.tip { left: 18px; top: 18px; width: 283px; height: 102px; padding: 3px 0 0 12px; }
.tip h4 { font-size: 24px; line-height: 34px; }
.tip p { font-size: 18px; font-weight: 300; line-height: 30px; letter-spacing: .95px; }
.legend { left: 306px; top: 472px; width: 487px; height: 159px; padding: 5px 12px; }
.legend h4 { font-size: 24px; line-height: 29px; margin-bottom: 4px; }
.scale { display: flex; flex-wrap: wrap; width: 450px; }
.scale span { width: 75px; height: 59px; padding: 24px 18px 0 0; text-align: center; font-size: 18px; font-weight: 300; line-height: 23px; letter-spacing: .8px; background: linear-gradient(var(--c), var(--c)) 0 0 / 75px 22px no-repeat; }
.s1 { --c: #c6dbef; } .s2 { --c: #9ecae1; } .s3 { --c: #6baed6; } .s4 { --c: #4292c6; } .s5 { --c: #2171b5; } .s6 { --c: #08519c; } .s7 { --c: #08306b; }
.panel { width: 818px; flex: none; background: #fff; display: flex; flex-direction: column; align-items: center; padding-top: 34px; }
.trade { width: 300px; height: 60px; border-radius: 30px; border: 1px solid #000; background: #e7ecef; padding: 0 14px 0 15px; box-shadow: 0 2px 20px rgba(0,0,0,.13); }
.trade i { width: 1px; height: 32px; }
.panel h2 { margin-top: 15px; font-size: 29.750px; line-height: 42px; text-align: center; color: #212121; }
.table { display: grid; grid-template-columns: 336px 336px; column-gap: 8px; row-gap: 7.400px; grid-auto-rows: 69px; margin-top: 35px; }
.table div { background: #e7ecef; text-align: center; line-height: 68px; font-size: 27px; color: #000; }
.table .alt { background: #f3f7f8; }
.table .th { background: #20304c; color: #fff; font-weight: 600; -webkit-text-stroke: .3px #fff; }
button { margin-top: 47px; width: 190px; height: 65px; border: 1px solid #192740; border-radius: 5px; background: #20304c; color: #fff; font: 26px Raleway, Lato, sans-serif; letter-spacing: 1.400px; padding: 0; }
```
